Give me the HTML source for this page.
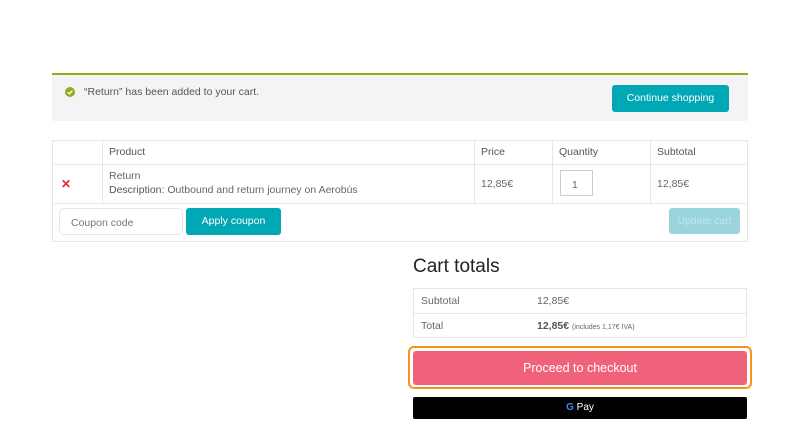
<!DOCTYPE html>
<html><head><meta charset="utf-8"><style>
*{box-sizing:border-box;margin:0;padding:0}
body{width:799px;height:423px;overflow:hidden;background:#fff;font-family:"Liberation Sans",sans-serif;color:#666;font-size:10.5px;position:relative}
.a{position:absolute}
.bd{border:1px solid #e6e6e6}
</style></head><body>
<div class="a" style="left:52px;top:73px;width:696px;height:48px;background:#f4f4f6;border-top:2px solid #8fae1b"></div>
<div class="a" style="left:65px;top:87px;width:10px;height:10px;border-radius:50%;background:#8fae1b"></div>
<svg class="a" style="left:65px;top:87px" width="10" height="10"><path d="M2.8 5.2l1.6 1.6 3-3.2" stroke="#fff" stroke-width="1.4" fill="none"/></svg>
<div class="a" style="left:84px;top:86px;color:#555">“Return” has been added to your cart.</div>
<div class="a" style="left:612px;top:85px;width:117px;height:27px;background:#00a8b5;border-radius:3px;color:#fff;text-align:center;line-height:27px">Continue shopping</div>

<div class="a bd" style="left:52px;top:140px;width:696px;height:102px"></div>
<div class="a" style="left:53px;top:164px;width:694px;height:1px;background:#e6e6e6"></div>
<div class="a" style="left:53px;top:203px;width:694px;height:1px;background:#e6e6e6"></div>
<div class="a" style="left:102px;top:141px;width:1px;height:62px;background:#e6e6e6"></div>
<div class="a" style="left:474px;top:141px;width:1px;height:62px;background:#e6e6e6"></div>
<div class="a" style="left:552px;top:141px;width:1px;height:62px;background:#e6e6e6"></div>
<div class="a" style="left:650px;top:141px;width:1px;height:62px;background:#e6e6e6"></div>
<div class="a" style="left:109px;top:146px;color:#555">Product</div>
<div class="a" style="left:481px;top:146px;color:#555">Price</div>
<div class="a" style="left:559px;top:146px;color:#555">Quantity</div>
<div class="a" style="left:657px;top:146px;color:#555">Subtotal</div>
<div class="a" style="left:61px;top:177px;color:#e22;font-size:12px;font-weight:bold">✕</div>
<div class="a" style="left:109px;top:170px">Return</div>
<div class="a" style="left:109px;top:184px"><span style="color:#555">Description:</span> Outbound and return journey on Aerobús</div>
<div class="a" style="left:481px;top:178px">12,85€</div>
<div class="a bd" style="left:560px;top:170px;width:33px;height:26px;border-color:#ccc;padding:8px 0 0 11px">1</div>
<div class="a" style="left:657px;top:178px">12,85€</div>
<div class="a bd" style="left:59px;top:208px;width:124px;height:27px;border-radius:5px;padding:8px 11px;color:#777">Coupon code</div>
<div class="a" style="left:186px;top:208px;width:95px;height:27px;background:#00a8b5;border-radius:3px;color:#fff;text-align:center;line-height:27px">Apply coupon</div>
<div class="a" style="left:669px;top:208px;width:71px;height:26px;background:#9ad5dc;border-radius:3px;color:#bfe6ea;text-align:center;line-height:26px">Update cart</div>

<div class="a" style="left:413px;top:256px;font-size:19px;color:#222">Cart totals</div>
<div class="a bd" style="left:413px;top:288px;width:334px;height:50px"></div>
<div class="a" style="left:414px;top:313px;width:332px;height:1px;background:#e6e6e6"></div>
<div class="a" style="left:421px;top:295px">Subtotal</div>
<div class="a" style="left:537px;top:295px">12,85€</div>
<div class="a" style="left:421px;top:320px">Total</div>
<div class="a" style="left:537px;top:320px"><b style="color:#555">12,85€</b> <span style="font-size:7px">(includes 1,17€ IVA)</span></div>
<div class="a" style="left:408px;top:346px;width:344px;height:43px;border:2.5px solid #f7931e;border-radius:6px"></div>
<div class="a" style="left:413px;top:351px;width:334px;height:34px;background:#f0627a;border-radius:3px;color:#fff;font-size:12.5px;text-align:center;line-height:34px">Proceed to checkout</div>
<div class="a" style="left:413px;top:397px;width:334px;height:22px;background:#000;border-radius:2px;color:#fff;text-align:center;line-height:22px;font-size:10px"><b style="color:#4285f4">G</b> Pay</div>
</body></html>
